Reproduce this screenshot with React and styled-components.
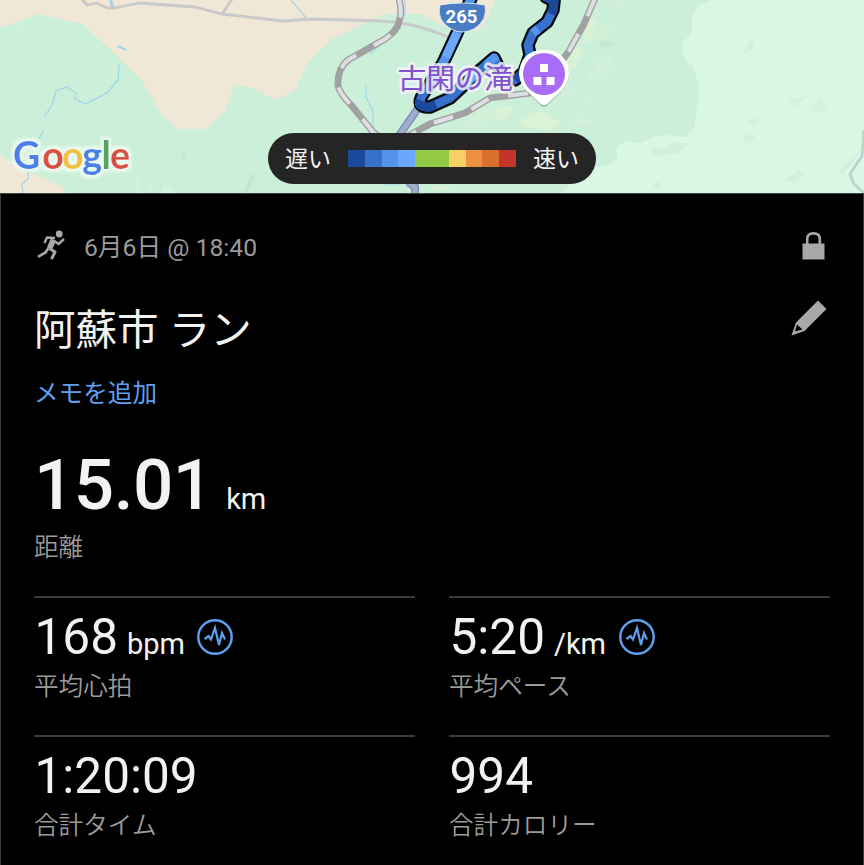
import React from 'react';
import styled, { createGlobalStyle } from 'styled-components';


const colors = {
    white: '#f2f2f2',
    grey: '#9b9b9b',
    icon: '#a8a8a8',
    blue: '#5f9ff0',
    line: '#3a3a3a',
    pill: '#252525',
};

const paceScale = [
    '#1c4a9b', '#3671cb', '#5494ed', '#6ba7fa', '#93ca45',
    '#93ca45', '#f6cf67', '#ec9041', '#db702c', '#c4342b',
];

const GlobalStyle = createGlobalStyle`
    body {
        margin: 0;
        background: #000;
        font-family: Roboto, "Noto Sans CJK JP", sans-serif;
    }
`;

const Screen = styled.div`
    box-sizing: border-box;
    width: 864px;
    height: 865px;
    overflow: hidden;
    background: #000;
    display: flex;
    flex-direction: column;
`;

const MapArea = styled.div`
    position: relative;
    height: 194px;
    flex: none;
    border-bottom: 1px solid #3e4642;
    box-sizing: border-box;

    svg {
        display: block;
    }
`;

const LegendPill = styled.div`
    position: absolute;
    left: 268px;
    top: 133px;
    width: 328px;
    height: 51px;
    box-sizing: border-box;
    padding: 0 17px;
    border-radius: 26px;
    background: ${colors.pill};
    color: ${colors.white};
    font-size: 23px;
    display: flex;
    align-items: center;
    justify-content: space-between;
`;

const LegendLabel = styled.span`
    padding-top: 2px;
    line-height: 49px;
    white-space: nowrap;
`;

const Scale = styled.div`
    display: flex;
    width: 168px;
    height: 17px;
`;

const ScaleStep = styled.span`
    flex: 1;
    background: ${(props) => props.$color};
`;

const Legend = () => (
    <LegendPill>
        <LegendLabel>遅い</LegendLabel>
        <Scale>
            {paceScale.map((color, i) => <ScaleStep key={i} $color={color} />)}
        </Scale>
        <LegendLabel>速い</LegendLabel>
    </LegendPill>
);

const route = 'M472 -4L457 33L443 63L422 96Q416 108 430 107L450 98L480 70L494 58L499 68M546 -3L554 1L553 10L547 22L533 33L528 45L530 55L524 72L515 80';
const railLeft = 'M398 -4Q403 10 399 22Q397 31 385 39L348 60Q337 69 338 86Q340 94 352 106L373 132L388 144';
const railRight = 'M596 -4L584 24L569 51L546 84L530 93L490 98L465 113L430 124L408 136';

const terrain = [
    { d: 'M516 120L540 111L563 123L548 131L526 127Z', fill: '#daf2d6' },
    { d: 'M486 105L506 106L498 118L477 129L465 123Z', fill: '#d2efd8' },
    { d: 'M498 107L512 106L508 118L494 120Z', fill: '#daf2d6' },
    { d: 'M566 60L581 48L576 66L562 75Z', fill: '#def3d5' },
    { d: 'M580 33L608 23L618 27L604 39L587 43Z', fill: '#d3f0d8' },
    { d: 'M590 14L597 22L592 35L582 44Z', fill: '#d9f2d6' },
    { d: 'M602 40L616 44L597 50Z', fill: '#c5e9d0' },
    { d: 'M574 44L585 52L574 66L566 70Z', fill: '#d9f2d6' },
    { d: 'M596 60L610 56L615 64L602 77L596 70Z', fill: '#d3f0d8' },
    { d: 'M590 69L596 80L586 79Z', fill: '#d3f0d9' },
    { d: 'M572 117L594 120L580 127L570 123Z', fill: '#d3f0d8' },
    { d: 'M587 98L594 98L589 105Z', fill: '#d3f0d9' },
    { d: 'M610 6L619 0L628 4L619 14Z', fill: '#d1efd8' },
    { d: 'M565 81L577 92L561 103L554 94Z', fill: '#d1efd8' },
    { d: 'M751 38L754 48L742 55Z', fill: '#d3efdd' },
    { d: 'M789 101L807 96L794 107Z', fill: '#d3efdd' },
    { d: 'M809 107L820 100L827 109L815 114Z', fill: '#d3efdd' },
    { d: 'M745 122L763 117L755 125Z', fill: '#d3efdd' },
    { d: 'M744 134L756 137L745 144Z', fill: '#d3efdd' },
    { d: 'M652 147L665 149L668 143L690 143L677 154L653 156Z', fill: '#d3efdd' },
    { d: 'M786 180L798 169L804 175L795 183Z', fill: '#d3efdd' },
    { d: 'M650 189L658 181L663 186Z', fill: '#d3efdd' },
    { d: 'M838 171L863 148L850 166L843 175Z', fill: '#d3efdd' },
    { d: 'M729 10L739 4L733 11Z', fill: '#e2f8e6' },
    { d: 'M16 29L22 21L24 31Z', fill: '#d5f1da' },
    { d: 'M181 146L186 157L182 163Z', fill: '#c5e9d0' },
    { d: 'M137 173L141 193L136 193ZM150 178L153 189L148 193ZM164 184L176 193L160 193Z', fill: '#d5f2dc' },
    { d: 'M243 193L250 177L256 172L248 193Z', fill: '#c3e6ce' },
    { d: 'M430 188L455 185L445 191Z', fill: '#daf2d6' },
];

const logoLetters = [
    ['G', 13, '#4b7fec'],
    ['o', 42.2, '#d9503f'],
    ['o', 62, '#f3bf3e'],
    ['g', 82.2, '#4b7fec'],
    ['l', 101.5, '#53a45b'],
    ['e', 110, '#d9503f'],
];

const MapLogo = () => (
    <g>
        <filter id="halo" x="-10%" y="-20%" width="120%" height="140%">
            <feMorphology in="SourceAlpha" operator="dilate" radius="3" />
            <feGaussianBlur stdDeviation="0.8" result="spread" />
            <feFlood floodColor="#eefaf1" floodOpacity="0.9" />
            <feComposite in2="spread" operator="in" />
            <feMerge>
                <feMergeNode />
                <feMergeNode in="SourceGraphic" />
            </feMerge>
        </filter>
        <text y="169" fontFamily="Lato" fontSize="37.500" fontWeight="700" filter="url(#halo)">
            {logoLetters.map(([letter, x, color]) => <tspan key={x} x={x} fill={color}>{letter}</tspan>)}
        </text>
    </g>
);

const Rail = ({ d }) => (
    <g fill="none">
        <path d={d} stroke="#a1a1a1" strokeWidth="6.8" />
        <path d={d} stroke="#dedfe5" strokeWidth="4" strokeDasharray="20 20" strokeDashoffset="-2" />
    </g>
);

const MapCanvas = () => (
    <svg width="864" height="193" viewBox="0 0 864 193">
        <rect width="864" height="193" fill="#cbefd8" />
        <path d="M712 0L699 5L692 17V31L683 43V54L687 63L694 67L699 90L696 112L694 128L685 137L670 135L652 137L641 143L626 141L616 147L618 159L606 166L590 167L560 193H864V0Z" fill="#daf7e4" />
        <path d="M0 0H495L487 19L478 31H454L420 14H384L332 39L307 63L296 89L290 93L275 100L250 87L234 85L225 111L207 129H177L160 113L141 79L83 24L38 14L0 28Z" fill="#f0e7d7" />
        <path d="M0 155L28 172L62 186L67 193H0Z" fill="#f0e7d7" />
        {terrain.map(({ d, fill }) => <path key={d} d={d} fill={fill} />)}
        <g fill="none" stroke="#9dd5eb" strokeWidth="1.2">
            <path d="M110 -2L113 8" strokeWidth="3" />
            <path d="M118 46L126 50" strokeWidth="2" />
            <path d="M119 65L118 80L107 93L85 104L75 99L76 93L67 87L56 91L52 105L44 117M44 130L38 140M28 168V179L22 184L23 193M291 0L308 20M366 85V97L373 111V126M405 0V13L397 30L370 54M384 185H400" />
        </g>
        <g fill="none" stroke="#c9c9c9" strokeWidth="2.8" strokeLinejoin="round">
            <path d="M81 -2L87 5L97 3L107 8H115L139 3L195 7L222 14L283 21L312 19L381 21Q413 22 448 37" />
            <path d="M222 14L233 -2" />
            <path d="M864 130L862 156L850 174L854 184L864 193" stroke="#bfd0cf" />
        </g>
        <Rail d={railLeft} />
        <Rail d={railRight} />
        <path d="M421 104L398 137M408 182L415 187V194" fill="none" stroke="#7f8eb5" strokeWidth="8" />
        <path d="M421 104L398 137M408 182L415 187V194" fill="none" stroke="#a0aecd" strokeWidth="5" />
        <g fill="none" strokeLinejoin="round" strokeLinecap="round">
            <path d={route} stroke="#050b14" strokeWidth="13.500" />
            <path d={route} stroke="#3671cb" strokeWidth="8.800" />
            <g strokeWidth="8.800" strokeLinecap="butt">
                <path d="M472 -4L457 33L443 63L432 80M480 70L465 84M496 62L494 58L486 65M538 29L533 33" stroke="#5494ed" />
                <path d="M457 33L446 57M476 74L467 82" stroke="#6ba7fa" />
                <path d="M546 -3L554 1L553 10L551 14M420 100Q417 108 430 107L436 104.500M524 72L515 80" stroke="#1c4a9b" />
            </g>
        </g>
        <path d="M440 5Q463 1 485 5Q488 20 474 29Q462 35 451 29Q436 20 440 5Z" fill="#4a7bc5" stroke="#eff9f2" strokeWidth="0.8" />
        <text x="461.5" y="23" textAnchor="middle" fontFamily="Roboto" fontSize="18.5" fontWeight="700" fill="#fff">265</text>
        <text x="397.5" y="89" fontFamily="Noto Sans CJK JP" fontSize="28.8" fontWeight="400" fill="#8052cf" stroke="#f3f3fb" strokeOpacity="0.85" strokeWidth="5.500" strokeLinejoin="round" paintOrder="stroke">古閑の滝</text>
        <path d="M544 51Q568 53 569 75Q568 87 558 95L547 106Q544 108 541 106L530 95Q520 87 519 75Q520 53 544 51Z" fill="#6f8b7b" opacity="0.4" />
        <path d="M544 49.500Q568 51 569 74Q568 86 558 94L547 104Q544 106 541 104L530 94Q520 86 519 74Q520 51 544 49.500Z" fill="#fff" />
        <circle cx="544" cy="74" r="21" fill="#a96cf7" />
        <path d="M540 64h8v8h-8ZM533.500 77h8v8h-8ZM546.500 77h8v8h-8Z" fill="#fff" />
        <MapLogo />
    </svg>
);

const Panel = styled.main`
    flex: 1;
    box-sizing: border-box;
    padding: 32px 33px 0;
    border-left: 1px solid #3b3b3b;
    border-right: 1px solid #3b3b3b;
`;

const DateRow = styled.header`
    display: flex;
    align-items: center;
    height: 40px;
    color: ${colors.grey};
    font-size: 24.7px;

    svg:last-child {
        margin-left: auto;
        margin-right: 5px;
    }
`;

const DateText = styled.span`
    margin: -2px 0 0 18px;
    white-space: nowrap;
`;

const TitleRow = styled.div`
    display: flex;
    justify-content: space-between;
    align-items: flex-start;
    margin-top: 34px;
    height: 60px;

    svg {
        margin-right: 3px;
    }
`;

const Title = styled.h1`
    margin: 1px 0 0;
    color: ${colors.white};
    font-size: 41.5px;
    line-height: 60px;
    font-weight: 400;
`;

const AddNote = styled.a`
    display: block;
    margin-top: 16px;
    color: ${colors.blue};
    font-size: 24.6px;
    line-height: 36px;
`;

const Distance = styled.section`
    height: 184px;
    padding-top: 31px;
    box-sizing: border-box;
`;

const Stats = styled.section`
    display: grid;
    grid-template-columns: 381px 381px;
    column-gap: 34px;
`;

const Stat = styled.div`
    box-sizing: border-box;
    height: 139px;
    border-top: 2px solid ${colors.line};
    padding-top: 10px;
`;

const ValueRow = styled.div`
    display: flex;
    align-items: baseline;
    color: ${colors.white};
    height: ${(props) => (props.$large ? '87px' : '61px')};
    line-height: ${(props) => (props.$large ? '84px' : '58px')};

    svg {
        margin: 11px 0 0 12.5px;
        align-self: flex-start;
    }
`;

const Value = styled.span`
    margin-left: ${(props) => (props.$large ? '0' : '0.5px')};
    font-size: ${(props) => (props.$large ? '71px' : '49.5px')};
    font-weight: ${(props) => (props.$large ? 500 : 400)};
    letter-spacing: ${(props) => (props.$large ? '-0.5px' : '0')};
`;

const Unit = styled.span`
    margin-left: ${(props) => (props.$large ? '13.5px' : '9px')};
    font-size: 29px;
`;

const Label = styled.div`
    color: ${colors.grey};
    font-size: 24.6px;
    line-height: 36px;
    font-weight: 350;
`;

const RunIcon = () => (
    <svg width="32" height="32" viewBox="0 0 32 32" fill="none" stroke={colors.icon} strokeLinejoin="round">
        <circle cx="25.200" cy="4" r="3.400" fill={colors.icon} stroke="none" />
        <path d="M19.500 9.500L15.500 18.500" strokeWidth="5.600" />
        <path d="M21 8L13 7.500L10.500 13M21 11.500L24.500 14L30 9" strokeWidth="2.400" />
        <path d="M15.500 18.500L21 22L17.500 29" strokeWidth="3" />
        <path d="M14.500 18L11.500 22.500L4 26.800" strokeWidth="2.600" />
    </svg>
);

const LockIcon = () => (
    <svg width="23" height="30" viewBox="0 0 23 30">
        <path d="M5.200 14V8Q5.200 2.400 11.500 2.400Q17.800 2.400 17.800 8V14" fill="none" stroke={colors.icon} strokeWidth="2.600" />
        <path d="M0.500 12.500H22.500V28.500H0.500Z" fill={colors.icon} />
    </svg>
);

const PencilIcon = () => (
    <svg width="36" height="36" viewBox="0 0 36 36">
        <path d="M27 0.500L35.500 9L13.500 31L0.500 35.500L5 22.500ZM6 24.500L4 31.500L11.500 29.500Z" fill={colors.icon} fillRule="evenodd" />
    </svg>
);

const PulseIcon = () => (
    <svg width="36" height="36" viewBox="0 0 36 36" fill="none" stroke={colors.blue}>
        <circle cx="18" cy="18" r="16.700" strokeWidth="2.400" />
        <path d="M7.500 20L11.500 17L14 20.500L18 9L22 26L25 14L28 20.500" strokeWidth="2.200" />
    </svg>
);

const Metric = ({ value, unit, label, pulse, large }) => (
    <>
        <ValueRow $large={large}>
            <Value $large={large}>{value}</Value>
            {unit && <Unit $large={large}>{unit}</Unit>}
            {pulse && <PulseIcon />}
        </ValueRow>
        <Label>{label}</Label>
    </>
);

const stats = [
    { value: '168', unit: 'bpm', label: '平均心拍', pulse: true },
    { value: '5:20', unit: '/km', label: '平均ペース', pulse: true },
    { value: '1:20:09', label: '合計タイム' },
    { value: '994', label: '合計カロリー' },
];

const App = () => (
    <Screen>
        <GlobalStyle />
        <MapArea>
            <MapCanvas />
            <Legend />
        </MapArea>
        <Panel>
            <DateRow>
                <RunIcon />
                <DateText>6月6日 @ 18:40</DateText>
                <LockIcon />
            </DateRow>
            <TitleRow>
                <Title>阿蘇市 ラン</Title>
                <PencilIcon />
            </TitleRow>
            <AddNote>メモを追加</AddNote>
            <Distance>
                <Metric large value="15.01" unit="km" label="距離" />
            </Distance>
            <Stats>
                {stats.map((stat) => <Stat key={stat.label}><Metric {...stat} /></Stat>)}
            </Stats>
        </Panel>
    </Screen>
);

export default App;
